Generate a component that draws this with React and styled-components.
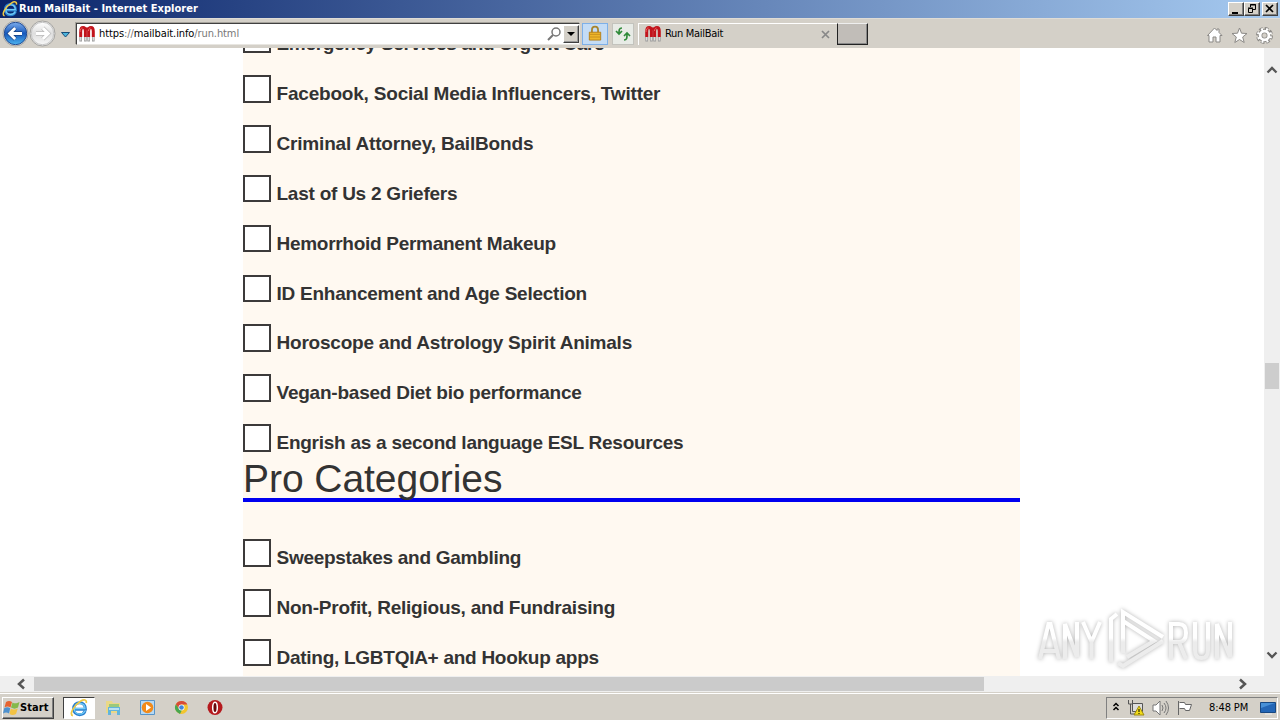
import React from 'react';
import styled, { createGlobalStyle } from 'styled-components';

const GlobalStyle = createGlobalStyle`
  * {
    box-sizing: border-box;
  }

  body {
    margin: 0;
    background: #fff;
    overflow: hidden;
  }
`;

const Desktop = styled.div`
  width: 1280px;
  height: 720px;
  display: flex;
  flex-direction: column;
  overflow: hidden;
  background: #d4d0c8;
  color: #000;
  font: 11px/14px 'DejaVu Sans Condensed', 'DejaVu Sans', sans-serif;
  white-space: nowrap;
`;

const TitleBar = styled.header`
  flex: 0 0 18px;
  display: flex;
  align-items: center;
  padding: 0 2px;
  background: linear-gradient(90deg, #0a246a, #a6caf0);
`;

const Title = styled.div`
  flex: 1;
  margin-left: 1px;
  color: #fff;
  font-size: 11px;
  font-weight: bold;
  letter-spacing: ${props => props.$tracking}px;
`;

const CaptionButton = styled.div`
  width: 16px;
  height: 14px;
  margin-left: ${props => props.$gap || 0}px;
  background: #d4d0c8;
  border: 1px solid;
  border-color: #fff #404040 #404040 #fff;
  box-shadow: inset -1px -1px #808080;

  svg {
    display: block;
  }
`;

const ToolBar = styled.nav`
  flex: 0 0 30px;
  display: flex;
  align-items: center;
  padding: 0 7px 0 2px;
  background: #d4d0c8;
  border-top: 1px solid #dfdcd6;

  svg {
    flex: none;
    display: block;
  }
`;

const NavButtons = styled.div`
  width: 74px;
  display: flex;
  align-items: center;
`;

const AddressBar = styled.div`
  width: 504px;
  height: 22px;
  display: flex;
  align-items: center;
  padding-left: 1px;
  background: #fff;
  border: 1px solid;
  border-color: #404040 #e8e6e1 #e8e6e1 #404040;
  box-shadow: -1px -1px #a5a29b;
`;

const Address = styled.div`
  flex: 1;
  margin: 1px 0 0 3px;
  color: #777;
  letter-spacing: ${props => props.$tracking}px;

  b {
    color: #000;
    font-weight: normal;
  }
`;

const DropButton = styled.div`
  width: 16px;
  height: 18px;
  margin-left: 1px;
  background: #d4d0c8;
  border: 1px solid;
  border-color: #fff #404040 #404040 #fff;
  box-shadow: inset -1px -1px #999;
`;

const ToolButton = styled.div`
  width: ${props => props.$width}px;
  height: 22px;
  margin-left: ${props => props.$gap}px;
  display: flex;
  align-items: center;
  justify-content: center;
  background: ${props => (props.$active ? '#c4dcf5' : '#e8ebe6')};
  border: 1px solid ${props => (props.$active ? '#7eb0e8' : '#c3c3bd')};
`;

const Tab = styled.div`
  width: 199px;
  height: 22px;
  margin-left: 4px;
  display: flex;
  align-items: center;
  padding: 0 7px 0 5px;
  border-left: 1px solid #fff;
  border-top: 1px solid #fff;
`;

const TabLabel = styled.div`
  flex: 1;
  margin-left: 3px;
  letter-spacing: ${props => props.$tracking}px;
`;

const NewTab = styled.div`
  width: 31px;
  height: 22px;
  background: #c1bdb8;
  border: 1px solid;
  border-color: #eee #222 #222 #222;
  box-shadow: inset -1px -1px #888;
`;

const Commands = styled.div`
  margin-left: auto;
  padding-top: 3px;
  display: flex;
  gap: 8px;
`;

const Viewport = styled.main`
  flex: 0 0 628px;
  display: flex;
  overflow: hidden;
  background: #fff;
`;

const PageArea = styled.div`
  flex: 1;
  height: 628px;
  overflow: hidden;
`;

const Column = styled.div`
  width: 777px;
  height: 700px;
  margin-left: 243px;
  background: #fff9f1;
  color: #333;
  font-family: 'Liberation Sans', Arial, sans-serif;
  overflow: hidden;
`;

const CategoryList = styled.div`
  display: flex;
  flex-direction: column;
  gap: 22.35px;
  margin-top: ${props => props.$top}px;
`;

const Category = styled.label`
  display: flex;
  height: 27.5px;
  font-size: 19px;
  font-weight: bold;
  line-height: 22px;
`;

const Checkbox = styled.span`
  width: 28px;
  height: 27.5px;
  margin-right: 5.5px;
  background: #fff;
  border: 2px solid #3c3a3a;
`;

const CategoryName = styled.span`
  margin-top: 8px;
  letter-spacing: ${props => props.$tracking}px;
`;

const Heading = styled.h1`
  height: 50px;
  margin: 0;
  border-bottom: 4px solid #0000f0;
  font-size: 39px;
  font-weight: normal;
  line-height: 53px;
  letter-spacing: -0.05px;
`;

const VerticalScroll = styled.div`
  width: 16px;
  display: flex;
  flex-direction: column;
  align-items: center;
  justify-content: space-between;
  padding: 16px 0 15px;
  background: #efefef;
`;

const VerticalThumb = styled.div`
  width: 14px;
  height: 26px;
  margin-top: 26px;
  background: #cdcdcd;
`;

const HorizontalScroll = styled.div`
  flex: 0 0 16px;
  display: flex;
  align-items: center;
  background: #efefef;
`;

const HorizontalThumb = styled.div`
  width: 950px;
  height: 14px;
  margin: 0 253px 0 5px;
  background: #cbcbcb;
`;

const TaskBar = styled.footer`
  flex: 0 0 28px;
  display: flex;
  align-items: center;
  padding-top: 2px;
  background: #d4d0c8;
  border-top: 1px solid #d4d0c8;
  box-shadow: inset 0 1px #fff;

  svg {
    flex: none;
    display: block;
  }
`;

const StartButton = styled.div`
  width: 52px;
  height: 22px;
  margin-left: 2px;
  display: flex;
  align-items: center;
  border: 1px solid;
  border-color: #fff #404040 #404040 #fff;
  box-shadow: inset -1px -1px #808080;
  font-weight: bold;
  letter-spacing: 0.1px;
`;

const TaskButton = styled.div`
  width: 32px;
  height: 22px;
  margin-left: ${props => props.$gap || 2}px;
  display: flex;
  align-items: center;
  justify-content: center;
  background: ${props => (props.$active ? '#fff' : 'transparent')};
  border: 1px solid;
  border-color: ${props => (props.$active ? '#404040 #fff #fff #404040' : 'transparent')};
`;

const Tray = styled.div`
  width: 172px;
  height: 22px;
  margin: 0 2px 0 auto;
  display: flex;
  align-items: center;
  gap: 2px;
  padding-left: 4px;
  border: 1px solid;
  border-color: #808080 #fff #fff #808080;
`;

const Clock = styled.div`
  width: 49px;
  margin-left: 5px;
  letter-spacing: ${props => props.$tracking}px;
`;

const Watermark = styled.div`
  position: absolute;
  left: 1030px;
  top: 604px;

  svg {
    display: block;
    filter: drop-shadow(0 0 2px rgba(0, 0, 0, 0.3));
  }
`;

const IeIcon = ({ size = 17 }) => (
  <svg width={size} height={size} viewBox="0 0 18 18" fill="none">
    <path d="M15.200 12c-1 2.400-3.100 3.700-5.600 3.700-3.500 0-6-2.500-6-6s2.500-6 6-6c3.600 0 5.900 2.500 5.800 6.600H5.200" stroke="#2b80cf" strokeWidth="3" />
    <path d="M15 11.800c-1 2.200-3 3.300-5.300 3.300-3.200 0-5.400-2.300-5.400-5.400s2.200-5.400 5.400-5.400c3.300 0 5.300 2.100 5.300 5.400H5" stroke="#73cdf6" strokeWidth="1.300" />
    <path d="M2.900 16.700C-1.200 15.800 3.500 6.700 10.500 2.300c3.600-2.200 6.500-1.700 5.700 1.700" stroke="#efc944" strokeWidth="1.700" />
  </svg>
);

const MagnetIcon = () => (
  <svg width="18" height="18" viewBox="0 0 18 18" fill="none">
    <path d="M2.700 12V6.500C2.700 1.300 7.400 1.300 7.400 6.500V12M10.600 12V6.500c0-5.200 4.700-5.200 4.700 0V12" stroke="#c2141c" strokeWidth="3" />
    <path d="M7.500 5q1.500-2.500 3 0" stroke="#c2141c" strokeWidth="3" />
    <path d="M2.700 12v4.500M7.400 12v4.500M10.600 12v4.500M15.300 12v4.500" stroke="#999" strokeWidth="2.600" />
    <path d="M2.700 12v3.500M7.400 12v3.500M10.600 12v3.500M15.300 12v3.500" stroke="#ddd" strokeWidth="1.300" />
    <path d="M2 7c0-3 1-4 2.500-4M10.500 6c0-2 1-3 2-3" stroke="#ef6664" />
  </svg>
);

const NavCircle = ({ forward }) => (
  <svg width="27" height="27" viewBox="0 0 27 27">
    <defs>
      <linearGradient id={forward ? 'fwd' : 'back'} x1="0" y1="0" x2="0" y2="1">
        <stop offset="0" stopColor={forward ? '#fff' : '#7cacec'} />
        <stop offset=".5" stopColor={forward ? '#dedede' : '#1859bc'} />
        <stop offset="1" stopColor={forward ? '#f7f7f7' : '#4cb4f0'} />
      </linearGradient>
    </defs>
    <circle cx="13.500" cy="13.500" r="12.500" fill="#e4e4e4" stroke="#a5a4a1" />
    <circle cx="13.500" cy="13.500" r="11.200" fill={`url(#${forward ? 'fwd' : 'back'})`} stroke={forward ? '#c6c6c6' : '#244c91'} />
    <path
      d="M20 13.500H8M13.200 8l-5.500 5.500 5.500 5.500"
      transform={forward ? 'rotate(180 13.500 13.500)' : undefined}
      fill="none"
      stroke={forward ? '#bbb' : '#163f80'}
      strokeWidth="4.300"
    />
    <path
      d="M20 13.500H8M13.200 8l-5.500 5.500 5.500 5.500"
      transform={forward ? 'rotate(180 13.500 13.500)' : undefined}
      fill="none"
      stroke="#fff"
      strokeWidth="3"
    />
  </svg>
);

const Chevron = ({ turn }) => (
  <svg width="16" height="12" viewBox="0 0 16 12">
    <path d="M3.500 8.500 8 4l4.500 4.500" transform={`rotate(${turn} 8 6)`} fill="none" stroke="#555" strokeWidth="2.300" />
  </svg>
);

const categories = [
  { name: 'Emergency Services and Urgent Care', tracking: -0.33 },
  { name: 'Facebook, Social Media Influencers, Twitter', tracking: -0.2 },
  { name: 'Criminal Attorney, BailBonds', tracking: -0.18 },
  { name: 'Last of Us 2 Griefers', tracking: -0.24 },
  { name: 'Hemorrhoid Permanent Makeup', tracking: -0.29 },
  { name: 'ID Enhancement and Age Selection', tracking: -0.24 },
  { name: 'Horoscope and Astrology Spirit Animals', tracking: -0.22 },
  { name: 'Vegan-based Diet bio performance', tracking: -0.23 },
  { name: 'Engrish as a second language ESL Resources', tracking: -0.26 },
];

const proCategories = [
  { name: 'Sweepstakes and Gambling', tracking: -0.28 },
  { name: 'Non-Profit, Religious, and Fundraising', tracking: -0.23 },
  { name: 'Dating, LGBTQIA+ and Hookup apps', tracking: -0.27 },
];

const Categories = ({ items, top }) => (
  <CategoryList $top={top}>
    {items.map(item => (
      <Category key={item.name}>
        <Checkbox />
        <CategoryName $tracking={item.tracking}>{item.name}</CategoryName>
      </Category>
    ))}
  </CategoryList>
);

const App = () => (
  <>
    <GlobalStyle />
    <Desktop>
      <TitleBar>
        <IeIcon size={16} />
        <Title $tracking={0.04}>Run MailBait - Internet Explorer</Title>
        <CaptionButton>
          <svg width="14" height="12"><path d="M3 9h6v2H3z" /></svg>
        </CaptionButton>
        <CaptionButton>
          <svg width="14" height="12" fill="none" stroke="#000"><path d="M5.500 4V1.500h5v5H8M5 2h6M3.500 5.500h4v4h-4zM3 5h5" /></svg>
        </CaptionButton>
        <CaptionButton $gap={2}>
          <svg width="14" height="12"><path d="m3 2 7 7M10 2 3 9" stroke="#000" strokeWidth="1.700" /></svg>
        </CaptionButton>
      </TitleBar>

      <ToolBar>
        <NavButtons>
          <NavCircle />
          <NavCircle forward />
          <svg width="20" height="12"><path d="M5.500 4.500h8L9.500 9z" fill="#4bb4dc" stroke="#174c78" /></svg>
        </NavButtons>
        <AddressBar>
          <MagnetIcon />
          <Address $tracking={-0.1}><b>https</b>://<b>mailbait.info</b>/run.html</Address>
          <svg width="15" height="16" fill="none" stroke="#777" strokeWidth="1.500"><circle cx="9" cy="6" r="4" /><path d="m6 9-5 5" strokeWidth="2" /></svg>
          <DropButton>
            <svg width="14" height="16"><path d="M3 6h8l-4 4z" /></svg>
          </DropButton>
        </AddressBar>
        <ToolButton $width={26} $gap={2} $active>
          <svg width="14" height="17" viewBox="0 0 16 18"><path d="M4.500 9V5c0-5 7-5 7 0v4" fill="none" stroke="#a8842c" strokeWidth="2" /><path d="M1.500 7.500h13v9h-13z" fill="#eeb629" stroke="#b17a16" /><path d="M2 10h12M2 13h12" stroke="#c58d1b" /></svg>
        </ToolButton>
        <ToolButton $width={22} $gap={4}>
          <svg width="16" height="16" fill="none" stroke="#2f8a39" strokeWidth="1.700"><path d="M7 2C4 2 4 4 4 8M1 5l3 3 3-3M9 14c3 0 3-2 3-6M9 10l3-3 3 3" /></svg>
        </ToolButton>
        <Tab>
          <MagnetIcon />
          <TabLabel $tracking={-0.3}>Run MailBait</TabLabel>
          <svg width="9" height="9"><path d="m1 1 7 7M8 1 1 8" stroke="#888" strokeWidth="1.700" /></svg>
        </Tab>
        <NewTab />
        <Commands>
          <svg width="17" height="17" fill="#fff" stroke="#8b8986"><path d="M1.500 8.500 8.500 1l2.500 2.500V2h2v3.500l3 3h-2V15h-4v-5H7v5H3V8.500z" /></svg>
          <svg width="17" height="17" fill="#fff" stroke="#8b8986"><path d="m8.500 1 2 5.200 5.500.3-4.300 3.500 1.500 5.500-4.700-3-4.700 3 1.500-5.500L1 6.500l5.500-.3z" /></svg>
          <svg width="17" height="17" viewBox="0 0 17 17" fill="none"><circle cx="8.500" cy="8.500" r="6.600" stroke="#8b8986" strokeWidth="3.800" strokeDasharray="3.400 1.784" /><circle cx="8.500" cy="8.500" r="4.500" stroke="#8b8986" strokeWidth="4.500" /><circle cx="8.500" cy="8.500" r="6.200" stroke="#fff" strokeWidth="2.800" strokeDasharray="1.800 3.070" strokeDashoffset="-.8" /><circle cx="8.500" cy="8.500" r="4.400" stroke="#fff" strokeWidth="2.800" /></svg>
        </Commands>
      </ToolBar>

      <Viewport>
        <PageArea>
          <Column>
            <Categories items={categories} top={-22.7} />
            <Heading>Pro Categories</Heading>
            <Categories items={proCategories} top={37.6} />
          </Column>
        </PageArea>
        <VerticalScroll>
          <Chevron turn={0} />
          <VerticalThumb />
          <Chevron turn={180} />
        </VerticalScroll>
      </Viewport>

      <HorizontalScroll>
        <svg width="29" height="16" fill="none" stroke="#555" strokeWidth="2.500"><path d="m24 3.500-5 4.500 5 4.500" /></svg>
        <HorizontalThumb />
        <svg width="12" height="16" fill="none" stroke="#555" strokeWidth="2.500"><path d="m3 3.500 5 4.500-5 4.500" /></svg>
      </HorizontalScroll>

      <TaskBar>
        <StartButton>
          <svg width="17" height="17" viewBox="0 0 17 17"><path d="M3 3c2-1.500 4-1.500 6 0L7.500 8.500c-2-1.500-4-1.500-6 0z" fill="#e66330" /><path d="M9.500 3.500c2 1.200 4 1.200 7-.5L15 8.500c-2.500 1.500-4.500 1.500-7 0z" fill="#85b94b" /><path d="M1.200 9.300c2-1.400 4-1.400 6 0L6 14.500c-2-1.500-4-1.400-6 0z" fill="#4e91ce" /><path d="M7.800 9.500c2 1.300 4 1.300 7 0L13 15c-2.500 1.300-4.500 1.200-6.500 0z" fill="#f3c344" /></svg>
          Start
        </StartButton>
        <TaskButton $gap={9} $active><IeIcon size={18} /></TaskButton>
        <TaskButton>
          <svg width="17" height="17"><path d="M1 2h6l1 2h7v10H1z" fill="#ead887" /><path d="M4 5h10v3H4z" fill="#9ac97c" /><path d="M3 8h12v8h-3v-4H6v4H3z" fill="#62b4dc" /><path d="M4 9h10v2H4z" fill="#b9e0f2" /></svg>
        </TaskButton>
        <TaskButton>
          <svg width="17" height="17"><path d="M1.500 1.500h14v14h-14z" fill="#b6d9f4" stroke="#5794c8" /><circle cx="8.500" cy="8.500" r="5.800" fill="#f18a1a" /><path d="m7 5 5 3.500L7 12z" fill="#fff" /></svg>
        </TaskButton>
        <TaskButton>
          <svg width="15" height="15" viewBox="0 0 15 15"><circle cx="7.500" cy="7.500" r="6.500" fill="#f2c52e" /><path d="M1.900 4.200a6.500 6.500 0 0 1 11.500.3H7.500L5 9z" fill="#d84a38" /><path d="M1.900 4.200 5 9l3 1-2 3.900A6.500 6.500 0 0 1 1.900 4.200" fill="#48a650" /><circle cx="7.500" cy="7.500" r="3" fill="#fff" /><circle cx="7.500" cy="7.500" r="2.300" fill="#4285d9" /></svg>
        </TaskButton>
        <TaskButton>
          <svg width="17" height="17"><circle cx="8" cy="8.500" r="7.500" fill="#b5191d" /><ellipse cx="8" cy="8.500" rx="2.300" ry="5.300" fill="#69070a" stroke="#fff" strokeWidth="1.500" /></svg>
        </TaskButton>
        <Tray>
          <svg width="10" height="14" fill="none" stroke="#000" strokeWidth="1.500"><path d="m2.500 5 2.500-2.500L7.500 5M2.500 9 5 6.500 7.500 9" /></svg>
          <svg width="23" height="18"><path d="M9.500 4.500h10v8h-10z" fill="#ddd" stroke="#555" /><path d="M5.500 1v4h4V1M7.500 5v10h5" fill="none" stroke="#555" /><path d="m16 7 5 9H11z" fill="#f2dc16" stroke="#9d8915" /><path d="M16 10v3M16 14v1" stroke="#000" /></svg>
          <svg width="23" height="18" fill="none" stroke="#777"><path d="M5 6h3l4-4v14l-4-4H5z" fill="#fff" /><path d="M14 6q2 3 0 6M16 4q4 5 0 10M18 2q5 7 0 14" /></svg>
          <svg width="29" height="18"><path d="M5.500 2v14M6.500 3.500h5l1 2h6l-2 6h-4l-1-2h-5" fill="#fff" stroke="#666" /></svg>
          <Clock $tracking={-0.1}>8:48 PM</Clock>
          <svg width="17" height="16"><path d="M.5 2.500h15v10H.5z" fill="#2366b6" stroke="#174882" /><path d="M1 3h14L1 8z" fill="#4790d7" /><path d="M5 14h7" stroke="#eee" /></svg>
        </Tray>
      </TaskBar>
    </Desktop>
    <Watermark>
      <svg width="206" height="72" viewBox="0 0 206 72" fill="none" stroke="url(#mark)" strokeWidth="4">
        <defs>
          <linearGradient id="mark" gradientUnits="userSpaceOnUse" x1="0" y1="34" x2="0" y2="38">
            <stop offset="0" stopColor="#fff" />
            <stop offset="1" stopColor="#ececec" />
          </linearGradient>
        </defs>
        <path d="m10 55 8.500-35h2L29 55M13 47h13M35 55V20l12 33V18M53 18l8.500 20L70 18M61.500 37v18" />
        <path d="M81 58V15l6-5M93 49V8l40 25M93 17l31 20-27 16M133 37 93 62l-5-3" />
        <path d="M141 55V20h8q7 0 7 9t-7 9h-8M149 38l7 17M165 18v28q0 8 6.500 8t6.500-8V18M187 55V20l13 33V18" />
      </svg>
    </Watermark>
  </>
);

export default App;
